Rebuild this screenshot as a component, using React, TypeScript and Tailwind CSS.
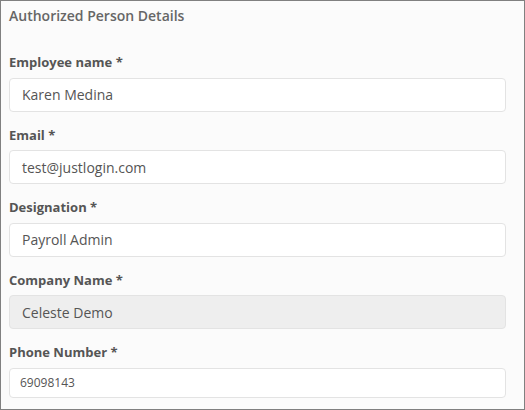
import React from "react";

const fields = [
  { label: "Employee name *", value: "Karen Medina", disabled: false, small: false },
  { label: "Email *", value: "test@justlogin.com", disabled: false, small: false },
  { label: "Designation *", value: "Payroll Admin", disabled: false, small: false },
  { label: "Company Name *", value: "Celeste Demo", disabled: true, small: false },
  { label: "Phone Number *", value: "69098143", disabled: false, small: true },
];

export default function App() {
  return (
    <div
      className="w-[525px] h-[410px] border border-[#808080] bg-[#fbfbfb] pl-2 pr-[18px] pt-[5px] overflow-hidden"
      style={{ fontFamily: '"Open Sans", "Liberation Sans", sans-serif' }}
    >
      <div className="text-[14px] leading-[20px] font-semibold text-[#666]">Authorized Person Details</div>
      <div className="flex flex-col pt-[13px]">
        {fields.map((f) => (
          <div key={f.label} className="flex flex-col pt-[14px]">
            <label className="text-[13px] leading-[18.5px] font-bold text-[#555] mb-[6px]">{f.label}</label>
            {f.small ? (
              <div className="h-[30px] w-full border border-[#e3e3e3] rounded-[4px] bg-white px-[10px] flex items-center text-[12px] text-[#555]">
                {f.value}
              </div>
            ) : (
              <div
                className={
                  f.disabled
                    ? "h-[34px] w-full border border-[#e3e3e3] rounded-[4px] bg-[#eeeeee] px-3 flex items-center text-[14px] text-[#555]"
                    : "h-[34px] w-full border border-[#e3e3e3] rounded-[4px] bg-white px-3 flex items-center text-[14px] text-[#555]"
                }
              >
                {f.value}
              </div>
            )}
          </div>
        ))}
      </div>
    </div>
  );
}
